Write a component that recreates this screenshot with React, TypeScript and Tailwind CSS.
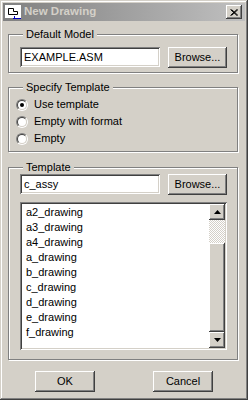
import * as React from 'react';

const raised = 'shadow-[inset_-1px_-1px_#404040,inset_1px_1px_#ffffff,inset_-2px_-2px_#808080,inset_2px_2px_#d4d0c8]';
const sunken = 'shadow-[inset_1px_1px_#808080,inset_-1px_-1px_#ffffff,inset_2px_2px_#404040,inset_-2px_-2px_#d4d0c8]';
const etched = 'border border-[#808080] shadow-[inset_1px_1px_#ffffff,1px_1px_#ffffff]';

const templates = ['a2_drawing', 'a3_drawing', 'a4_drawing', 'a_drawing', 'b_drawing', 'c_drawing', 'd_drawing', 'e_drawing', 'f_drawing'];

function Group({ label, className, children }: { label: string; className: string; children: React.ReactNode }) {
    return (
        <div className={`relative ${etched} ${className}`}>
            <span className="absolute -top-[7px] left-[14px] bg-[#d4d0c8] px-[3px] leading-[13px]">{label}</span>
            {children}
        </div>
    );
}

function Button({ label, className }: { label: string; className: string }) {
    return (
        <div className={`flex items-center justify-center bg-[#d4d0c8] ${raised} ${className}`}>
            {label}
        </div>
    );
}

function Field({ value }: { value: string }) {
    return (
        <div className={`flex h-[20px] w-[140px] items-center bg-white pl-[4px] ${sunken}`}>{value}</div>
    );
}

function Radio({ label, checked }: { label: string; checked?: boolean }) {
    return (
        <div className="flex h-[17px] items-center gap-[6px]">
            <div className="flex h-[12px] w-[12px] items-center justify-center rounded-full border border-t-[#808080] border-l-[#808080] border-b-white border-r-white">
                <div className="flex h-[10px] w-[10px] items-center justify-center rounded-full border border-t-[#404040] border-l-[#404040] border-b-[#d4d0c8] border-r-[#d4d0c8] bg-white">
                    {checked && <div className="h-[4px] w-[4px] rounded-full bg-black" />}
                </div>
            </div>
            <span>{label}</span>
        </div>
    );
}

function Arrow({ down }: { down?: boolean }) {
    return (
        <div className={`flex h-[16px] w-[16px] items-center justify-center bg-[#d4d0c8] ${raised}`}>
            <svg width="7" height="4" viewBox="0 0 7 4">
                <polygon points={down ? '0,0 7,0 3.5,4' : '3.5,0 7,4 0,4'} fill="#000" />
            </svg>
        </div>
    );
}

export default function App() {
    return (
        <div
            className="h-[400px] w-[248px] bg-[#d4d0c8] p-[3px] text-[11px] text-black shadow-[inset_-1px_-1px_#404040,inset_1px_1px_#d4d0c8,inset_-2px_-2px_#808080,inset_2px_2px_#ffffff] font-['Liberation_Sans',Arial,sans-serif]"
        >
            {/* Title bar */}
            <div className="flex h-[18px] items-center bg-gradient-to-r from-[#808080] to-[#c0c0c0]">
                <div className="ml-[2px] h-[14px] w-[16px]">
                    <svg width="16" height="14" viewBox="0 0 16 14">
                        <rect x="0" y="0" width="16" height="13" fill="#fff" />
                        <path d="M3.5 3.5 H8.5 V6.5 H12.5 V9.5 H3.5 Z" fill="none" stroke="#000" strokeWidth="1" />
                        <path d="M8 13.5 H16" stroke="#0000c0" strokeWidth="1" />
                        <path d="M9.5 11 V14" stroke="#0000c0" strokeWidth="1" />
                    </svg>
                </div>
                <span className="ml-[3px] flex-1 text-[11.5px] font-bold text-[#d4d0c8]">New Drawing</span>
                <div className={`mr-[3px] flex h-[14px] w-[16px] items-center justify-center bg-[#d4d0c8] ${raised}`}>
                    <svg width="8" height="7" viewBox="0 0 8 7">
                        <path d="M0.5 0.5 L7 6.5 M1.5 0.5 L8 6.5 M7 0.5 L0.5 6.5 M8 0.5 L1.5 6.5" stroke="#000" strokeWidth="1" />
                    </svg>
                </div>
            </div>

            <div className="ml-[5px] w-[230px]">
                <Group label="Default Model" className="mt-[13px] pb-[4px] pl-[11px] pr-[10px] pt-[12px]">
                    <div className="flex items-start gap-[8px]">
                        <Field value="EXAMPLE.ASM" />
                        <Button label="Browse..." className="h-[21px] w-[59px]" />
                    </div>
                </Group>

                <Group label="Specify Template" className="mt-[14px] pb-[4px] pl-[7px] pt-[8px]">
                    <Radio label="Use template" checked />
                    <Radio label="Empty with format" />
                    <Radio label="Empty" />
                </Group>

                <Group label="Template" className="mt-[15px] pb-[9px] pl-[11px] pr-[10px] pt-[6px]">
                    <div className="flex items-start gap-[8px]">
                        <Field value="c_assy" />
                        <Button label="Browse..." className="h-[21px] w-[59px]" />
                    </div>
                    <div className={`mt-[7px] flex h-[148px] w-[207px] bg-white p-[2px] ${sunken}`}>
                        <div className="flex-1 pl-[4px] pt-[1px]">
                            {templates.map((t) => (
                                <div key={t} className="h-[15px] leading-[15px]">{t}</div>
                            ))}
                        </div>
                        <div className="flex w-[16px] flex-col">
                            <Arrow />
                            <div className="h-[23px] bg-[repeating-conic-gradient(#d4d0c8_0_25%,#ffffff_0_50%)] bg-size-[2px_2px]" />
                            <div className={`flex-1 bg-[#d4d0c8] ${raised}`} />
                            <Arrow down />
                        </div>
                    </div>
                </Group>
            </div>

            <div className="mt-[11px] flex justify-center gap-[58px]">
                <Button label="OK" className="h-[21px] w-[60px]" />
                <Button label="Cancel" className="h-[21px] w-[60px]" />
            </div>
        </div>
    );
}
